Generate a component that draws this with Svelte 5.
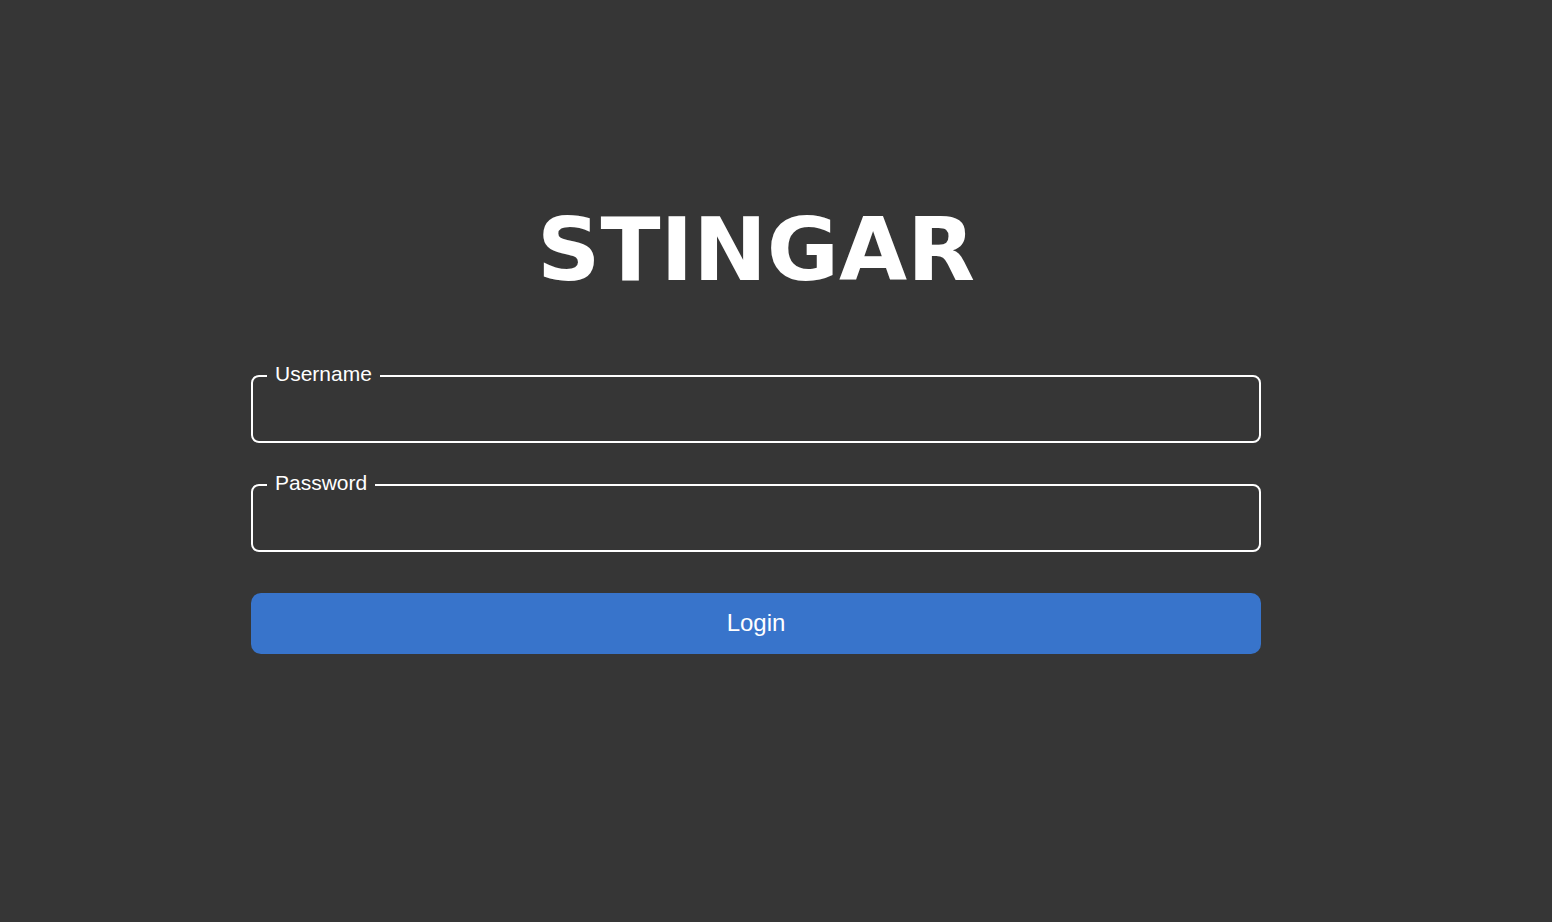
<script>
  let username = $state('');
  let password = $state('');

  function submit(event) {
    event.preventDefault();
  }
</script>

<main class="page">
  <h1 class="brand">STINGAR</h1>

  <form class="login" onsubmit={submit}>
    <div class="field">
      <label for="username">Username</label>
      <input id="username" type="text" autocomplete="username" bind:value={username} />
    </div>

    <div class="field">
      <label for="password">Password</label>
      <input id="password" type="password" autocomplete="current-password" bind:value={password} />
    </div>

    <button type="submit">Login</button>
  </form>
</main>

<style>
  :global(body) {
    background: #363636;
  }

  .page {
    box-sizing: border-box;
    min-height: 100vh;
    padding: 198px 291px 40px 251px;
    color: #fff;
    font-family: "Liberation Sans", Arial, sans-serif;
  }

  .brand {
    margin: 0 0 73px;
    font-family: "DejaVu Sans", Verdana, sans-serif;
    font-size: 88px;
    font-weight: 700;
    line-height: 104px;
    text-align: center;
  }

  .login {
    display: flex;
    flex-direction: column;
    gap: 41px;
  }

  .field {
    position: relative;
  }

  /* The label sits over the top border and hides the part behind it. */
  label {
    position: absolute;
    top: -13px;
    left: 16px;
    padding: 0 8px;
    background: #363636;
    font-size: 21px;
    line-height: 24px;
  }

  input {
    display: block;
    box-sizing: border-box;
    width: 100%;
    height: 68px;
    padding: 0 24px;
    border: 2px solid #fff;
    border-radius: 8px;
    outline: none;
    background: transparent;
    color: inherit;
    font: inherit;
    font-size: 24px;
  }

  input:focus {
    border-color: #3874cb;
  }

  button {
    height: 61px;
    padding: 0 0 2px;
    border: 0;
    border-radius: 10px;
    background: #3874cb;
    color: inherit;
    font: inherit;
    font-size: 24px;
    cursor: pointer;
  }
</style>
